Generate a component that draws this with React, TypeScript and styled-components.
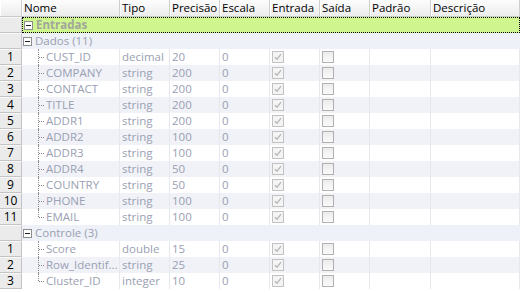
import React from "react";
import styled, { createGlobalStyle } from "styled-components";

const GlobalStyle = createGlobalStyle`
  html, body {
    margin: 0;
    padding: 0;
    background: #ffffff;
    overflow: hidden;
  }
  body {
    font-family: "Open Sans", "DejaVu Sans", sans-serif;
    font-size: 11px;
  }
`;

const COLS = "22px 98px 50px 50px 50px 50px 50px 61px 1fr";

type Field = {
  name: string;
  type: string;
  precision: number;
  scale: number;
  input: boolean;
  output: boolean;
};

const dados: Field[] = [
  { name: "CUST_ID", type: "decimal", precision: 20, scale: 0, input: true, output: false },
  { name: "COMPANY", type: "string", precision: 200, scale: 0, input: true, output: false },
  { name: "CONTACT", type: "string", precision: 200, scale: 0, input: true, output: false },
  { name: "TITLE", type: "string", precision: 200, scale: 0, input: true, output: false },
  { name: "ADDR1", type: "string", precision: 200, scale: 0, input: true, output: false },
  { name: "ADDR2", type: "string", precision: 100, scale: 0, input: true, output: false },
  { name: "ADDR3", type: "string", precision: 100, scale: 0, input: true, output: false },
  { name: "ADDR4", type: "string", precision: 50, scale: 0, input: true, output: false },
  { name: "COUNTRY", type: "string", precision: 50, scale: 0, input: true, output: false },
  { name: "PHONE", type: "string", precision: 100, scale: 0, input: true, output: false },
  { name: "EMAIL", type: "string", precision: 100, scale: 0, input: true, output: false },
];

const controle: Field[] = [
  { name: "Score", type: "double", precision: 15, scale: 0, input: true, output: false },
  { name: "Row_Identif...", type: "string", precision: 25, scale: 0, input: true, output: false },
  { name: "Cluster_ID", type: "integer", precision: 10, scale: 0, input: true, output: false },
];

const headers = ["Nome", "Tipo", "Precisão", "Escala", "Entrada", "Saída", "Padrão", "Descrição"];

const Grid = styled.div`
  width: 520px;
  display: flex;
  flex-direction: column;
  color: #9aa0b2;
`;

const HeaderRow = styled.div`
  display: grid;
  grid-template-columns: ${COLS};
  height: 17px;
  background: linear-gradient(#fdfdfd, #ececec);
  border-bottom: 1px solid #c9c9c9;
  box-sizing: border-box;
`;

const HeaderCell = styled.div`
  color: #000000;
  font-size: 11.5px;
  line-height: 15px;
  padding-left: 2px;
  border-right: 1px solid #cfcfcf;
  box-shadow: inset 1px 0 0 #ffffff;
  white-space: nowrap;
  overflow: hidden;
`;

const Row = styled.div<{ $alt?: boolean }>`
  display: grid;
  grid-template-columns: ${COLS};
  height: 16px;
  line-height: 16px;
  background: ${(p) => (p.$alt ? "#f0f2f8" : "#ffffff")};
`;

const RowNum = styled.div`
  background: #ebebeb;
  color: #000000;
  font-size: 12px;
  line-height: 14px;
  text-align: center;
  border-top: 1px solid #f8f8f8;
  border-bottom: 1px solid #c4c4c4;
  border-right: 1px solid #c4c4c4;
  box-sizing: border-box;
  height: 16px;
`;

const Cell = styled.div`
  height: 16px;
  line-height: 16px;
  padding-left: 2px;
  border-right: 1px solid #e6e8ee;
  white-space: nowrap;
  overflow: hidden;
  display: flex;
  align-items: center;
`;

const GroupRow = styled.div`
  display: grid;
  grid-template-columns: 22px 1fr;
  height: 16px;
  line-height: 14px;
`;

const GroupBody = styled.div<{ $focused?: boolean }>`
  display: flex;
  align-items: center;
  gap: 3px;
  padding-left: 1px;
  height: 16px;
  overflow: hidden;
  box-sizing: border-box;
  background: ${(p) => (p.$focused ? "#cff58f" : "#eef1f7")};
  border: ${(p) => (p.$focused ? "1px dotted #000000" : "none")};
  font-weight: ${(p) => (p.$focused ? 700 : 400)};
  color: ${(p) => (p.$focused ? "#a2a69a" : "#9aa0b2")};
  font-size: 11.5px;
`;

const Toggle = styled.span`
  width: 9px;
  height: 9px;
  box-sizing: border-box;
  border: 1px solid #8c8c8c;
  background: #ffffff;
  display: flex;
  align-items: center;
  justify-content: center;
  flex-shrink: 0;
  &::after {
    content: "";
    width: 5px;
    height: 1px;
    background: #222222;
  }
`;

const NameCell = styled(Cell)`
  padding-left: 16px;
  gap: 2px;
  font-size: 11.5px;
`;

const Guide = styled.span<{ $last?: boolean }>`
  position: relative;
  width: 6px;
  height: 16px;
  flex-shrink: 0;
  &::before {
    content: "";
    position: absolute;
    left: 0;
    top: 0;
    height: ${(p) => (p.$last ? "8px" : "16px")};
    border-left: 1px dotted #8a8a8a;
  }
  &::after {
    content: "";
    position: absolute;
    left: 1px;
    top: 8px;
    width: 5px;
    border-top: 1px dotted #8a8a8a;
  }
`;

const TextCell = styled(Cell)`
  font-size: 11.5px;
`;

const Check = styled.span<{ $checked?: boolean }>`
  width: 12px;
  height: 12px;
  box-sizing: border-box;
  border: 1px solid ${(p) => (p.$checked ? "#c2c2c2" : "#b0b0b0")};
  background: ${(p) => (p.$checked ? "#f4f4f4" : "linear-gradient(#ececec, #fafafa)")};
  display: flex;
  align-items: center;
  justify-content: center;
`;

const CheckBox: React.FC<{ checked: boolean }> = ({ checked }) => (
  <Check $checked={checked}>
    {checked && (
      <svg width="8" height="8" viewBox="0 0 8 8">
        <path d="M1 4.2 L3 6.3 L7 1.2" fill="none" stroke="#b4b4b4" strokeWidth="1.3" />
      </svg>
    )}
  </Check>
);

const FieldRow: React.FC<{ field: Field; index: number; last: boolean }> = ({ field, index, last }) => (
  <Row $alt={index % 2 === 1}>
    <RowNum>{index + 1}</RowNum>
    <NameCell>
      <Guide $last={last} />
      <span>{field.name}</span>
    </NameCell>
    <TextCell>{field.type}</TextCell>
    <TextCell>{field.precision}</TextCell>
    <TextCell>{field.scale}</TextCell>
    <Cell>
      <CheckBox checked={field.input} />
    </Cell>
    <Cell>
      <CheckBox checked={field.output} />
    </Cell>
    <Cell />
    <Cell />
  </Row>
);

const Group: React.FC<{ label: string; focused?: boolean }> = ({ label, focused }) => (
  <GroupRow>
    <RowNum />
    <GroupBody $focused={focused}>
      <Toggle />
      <span>{label}</span>
    </GroupBody>
  </GroupRow>
);

export default function App() {
  return (
    <>
      <GlobalStyle />
      <Grid>
        <HeaderRow>
          <HeaderCell />
          {headers.map((h) => (
            <HeaderCell key={h}>{h}</HeaderCell>
          ))}
        </HeaderRow>
        <Group label="Entradas" focused />
        <Group label="Dados (11)" />
        {dados.map((f, i) => (
          <FieldRow key={f.name} field={f} index={i} last={i === dados.length - 1} />
        ))}
        <Group label="Controle (3)" />
        {controle.map((f, i) => (
          <FieldRow key={f.name} field={f} index={i} last={i === controle.length - 1} />
        ))}
      </Grid>
    </>
  );
}
